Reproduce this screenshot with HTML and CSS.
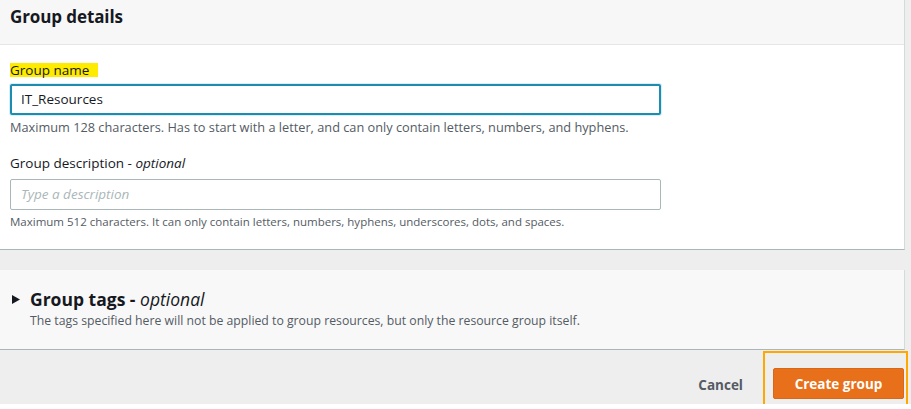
FILE: index.html
```html
<!DOCTYPE html>
<html>
<head>
<meta charset="utf-8">
<link rel="stylesheet" href="styles.css">
</head>
<body>
<div class="page">
  <section class="card details">
    <header class="card-header"><h2>Group details</h2></header>
    <div class="card-body">
      <div class="field">
        <label class="label"><span class="hl">Group name</span></label>
        <div class="input focused">IT_Resources</div>
        <div class="hint wide">Maximum 128 characters. Has to start with a letter, and can only contain letters, numbers, and hyphens.</div>
      </div>
      <div class="field second">
        <label class="label">Group description - <i>optional</i></label>
        <div class="input"><i class="ph">Type a description</i></div>
        <div class="hint">Maximum 512 characters. It can only contain letters, numbers, hyphens, underscores, dots, and spaces.</div>
      </div>
    </div>
  </section>
  <section class="card tags">
    <div class="tags-title">
      <svg class="caret" width="8" height="9" viewBox="0 0 8 9"><path d="M0 0 L8 4.5 L0 9 Z" fill="#16191f"/></svg>
      <h3>Group tags - <i>optional</i></h3>
    </div>
    <div class="tags-desc">The tags specified here will not be applied to group resources, but only the resource group itself.</div>
  </section>
  <footer class="actions">
    <button class="cancel">Cancel</button>
    <div class="frame"><button class="primary">Create group</button></div>
  </footer>
</div>
</body>
</html>
```
FILE: styles.css
```css
* { box-sizing: border-box; }
html, body { margin: 0; padding: 0; background: #fff; }
body { font-family: "Open Sans", "Noto Sans", Arial, sans-serif; color: #16191f; }
.page {
  width: 911px;
  height: 404px;
  background: #eeeeee;
  display: flex;
  flex-direction: column;
}
.card {
  flex-shrink: 0;
  width: 905px;
  background: #fff;
  border-right: 1px solid #d5dbdb;
  border-bottom: 1px solid #aab7b8;
}
.card-header {
  height: 45px;
  background: #f7f7f7;
  border-bottom: 1px solid #e6e6e6;
  padding: 0 10px;
  display: flex;
  align-items: center;
}
.card-header h2 {
  margin: 0;
  margin-top: -12px;
  font-size: 17px;
  font-weight: 700;
  letter-spacing: -0.1px;
}
.card-body { padding: 16px 10px 0; height: 204px; }
.label {
  display: block;
  font-size: 13.5px;
  line-height: 18px;
  height: 21px;
}
.second .label { height: 23px; }
.hl { background: #ffeb00; padding: 0 9px 0 0; display: inline-block; line-height: 14px; }
.label i { font-style: italic; }
.input {
  width: 651px;
  height: 31px;
  margin-top: 2px;
  border: 1px solid #aab7b8;
  border-radius: 2px;
  padding: 0 10px;
  font-size: 13.5px;
  line-height: 29px;
  color: #16191f;
}
.input.focused {
  border: 2px solid #1d8cb0;
  box-shadow: 0 0 0 1px #d6f0f6;
  padding: 0 9px;
  line-height: 27px;
}
.ph { color: #aab7b8; }
.hint {
  font-size: 11.5px;
  color: #545b64;
  line-height: 16px;
  margin-top: 4px;
}
.hint.wide { font-size: 12.75px; }
.field.second { margin-top: 19px; }
.tags {
  margin-top: 20px;
  height: 80px;
  background: #f8f8f8;
  padding: 18px 10px 0 12px;
}
.tags-title { display: flex; align-items: center; gap: 10px; }
.tags-title h3 { margin: 0; font-size: 17.5px; font-weight: 700; line-height: 22px; }
.tags-title h3 i { font-weight: 400; }
.tags-desc {
  margin-left: 18px;
  margin-top: 3px;
  font-size: 12.25px;
  color: #545b64;
  line-height: 16px;
}
.actions {
  flex: 1 1 0;
  min-height: 0;
  display: flex;
  justify-content: flex-end;
  align-items: flex-start;
  padding: 1px 3px 0 0;
}
.cancel {
  margin-top: 22px;
  border: 0;
  background: transparent;
  font-family: inherit;
  font-weight: 700;
  font-size: 13.5px;
  color: #545b64;
  padding: 3px 20px;
}
.frame {
  flex-shrink: 0;
  height: 57px;
  border: 2px solid #ffa800;
  padding: 15px 2px 0 8px;
}
.primary {
  width: 131px;
  height: 31px;
  background: #e8701a;
  border: 1px solid #d96716;
  border-radius: 2px;
  color: #fff;
  font-family: inherit;
  font-weight: 700;
  font-size: 13.5px;
}
```
